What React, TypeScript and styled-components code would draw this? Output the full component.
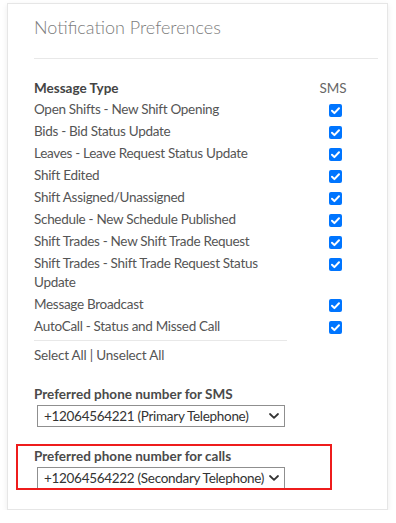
import styled, { createGlobalStyle } from "styled-components";

const messageTypes = [
  "Open Shifts - New Shift Opening",
  "Bids - Bid Status Update",
  "Leaves - Leave Request Status Update",
  "Shift Edited",
  "Shift Assigned/Unassigned",
  "Schedule - New Schedule Published",
  "Shift Trades - New Shift Trade Request",
  "Shift Trades - Shift Trade Request Status Update",
  "Message Broadcast",
  "AutoCall - Status and Missed Call",
];

const GlobalStyle = createGlobalStyle`
  html, body {
    margin: 0;
    padding: 0;
    background: #ffffff;
  }
  body {
    font-family: Lato, "Liberation Sans", sans-serif;
    color: #555555;
  }
`;

const Check: React.FC = () => (
  <CheckBox>
    <svg viewBox="0 0 13 13" width="13" height="13">
      <path d="M3 6.8 L5.4 9.1 L10 4.2" fill="none" stroke="#fff" strokeWidth="2" strokeLinecap="round" strokeLinejoin="round" />
    </svg>
  </CheckBox>
);

const Chevron: React.FC = () => (
  <svg viewBox="0 0 10 6" width="10" height="6">
    <path d="M1 1 L5 4.8 L9 1" fill="none" stroke="#333" strokeWidth="1.8" strokeLinecap="round" strokeLinejoin="round" />
  </svg>
);

const PhoneSelect: React.FC<{ value: string }> = ({ value }) => (
  <SelectBox>
    <span>{value}</span>
    <Chevron />
  </SelectBox>
);

const App: React.FC = () => {
  return (
    <>
      <GlobalStyle />
      <Card>
        <Title>Notification Preferences</Title>
        <Divider />
        <Table>
          <HeadCell>Message Type</HeadCell>
          <HeadCell center>SMS</HeadCell>
          {messageTypes.map(t => (
            <Row key={t}>
              <TypeCell>{t}</TypeCell>
              <CheckCell>
                <Check />
              </CheckCell>
            </Row>
          ))}
        </Table>
        <ShortDivider />
        <Links>Select All | Unselect All</Links>
        <Field>
          <Label>Preferred phone number for SMS</Label>
          <PhoneSelect value="+12064564221 (Primary Telephone)" />
        </Field>
        <Field>
          <Label>Preferred phone number for calls</Label>
          <PhoneSelect value="+12064564222 (Secondary Telephone)" />
          <Highlight />
        </Field>
      </Card>
    </>
  );
};

const Card = styled.div`
  box-sizing: border-box;
  width: 381px;
  margin: 3px 0 0 7px;
  padding: 10px 9px 20px 26px;
  border: 1px solid #e6e6e6;
  background: #fff;
  box-shadow: 0 2px 6px rgba(0, 0, 0, 0.08);
`;

const Title = styled.h2`
  margin: 0;
  font-size: 18px;
  font-weight: 300;
  line-height: 26px;
  color: #7c7c7c;
`;

const Divider = styled.hr`
  margin: 18px 0 0;
  border: 0;
  border-top: 1px solid #e8e8e8;
`;

const Table = styled.div`
  display: grid;
  grid-template-columns: 253px 92px;
  margin-top: 20px;
  font-size: 13.5px;
  letter-spacing: -0.3px;
`;

const HeadCell = styled.div<{ center?: boolean }>`
  font-weight: ${p => (p.center ? 400 : 700)};
  color: ${p => (p.center ? "#666" : "#444")};
  text-align: ${p => (p.center ? "center" : "left")};
  letter-spacing: 0;
  line-height: 19px;
`;

const Row = styled.div`
  display: contents;
`;

const TypeCell = styled.div`
  line-height: 19px;
  padding: 1.5px 10px 1.5px 0;
`;

const CheckCell = styled.div`
  display: flex;
  justify-content: center;
  padding: 6px 0 0 4px;
`;

const CheckBox = styled.span`
  display: flex;
  width: 13px;
  height: 13px;
  border-radius: 2px;
  background: #0075ff;
`;

const ShortDivider = styled.hr`
  width: 253px;
  margin: 3px 0 0;
  border: 0;
  border-top: 1px solid #e8e8e8;
`;

const Links = styled.div`
  margin-top: 4px;
  font-size: 13.5px;
  letter-spacing: -0.2px;
  line-height: 20px;
  color: #555;
`;

const Field = styled.div`
  position: relative;
  margin-top: 19px;
`;

const Label = styled.div`
  font-size: 13.5px;
  font-weight: 700;
  line-height: 20px;
  color: #4a4a4a;
`;

const SelectBox = styled.div`
  box-sizing: border-box;
  display: flex;
  align-items: center;
  justify-content: space-between;
  width: 248px;
  height: 22px;
  margin: 1px 0 0 3px;
  padding: 0 5px 0 6px;
  border: 1px solid #8f8f8f;
  font-size: 13.5px;
  letter-spacing: -0.3px;
  white-space: nowrap;
  color: #333;
  background: #fff;
`;

const Highlight = styled.div`
  position: absolute;
  left: -18px;
  top: -2px;
  width: 316px;
  bottom: -1px;
  box-sizing: border-box;
  border: 2px solid #ee1c1c;
  pointer-events: none;
`;

export default App;
